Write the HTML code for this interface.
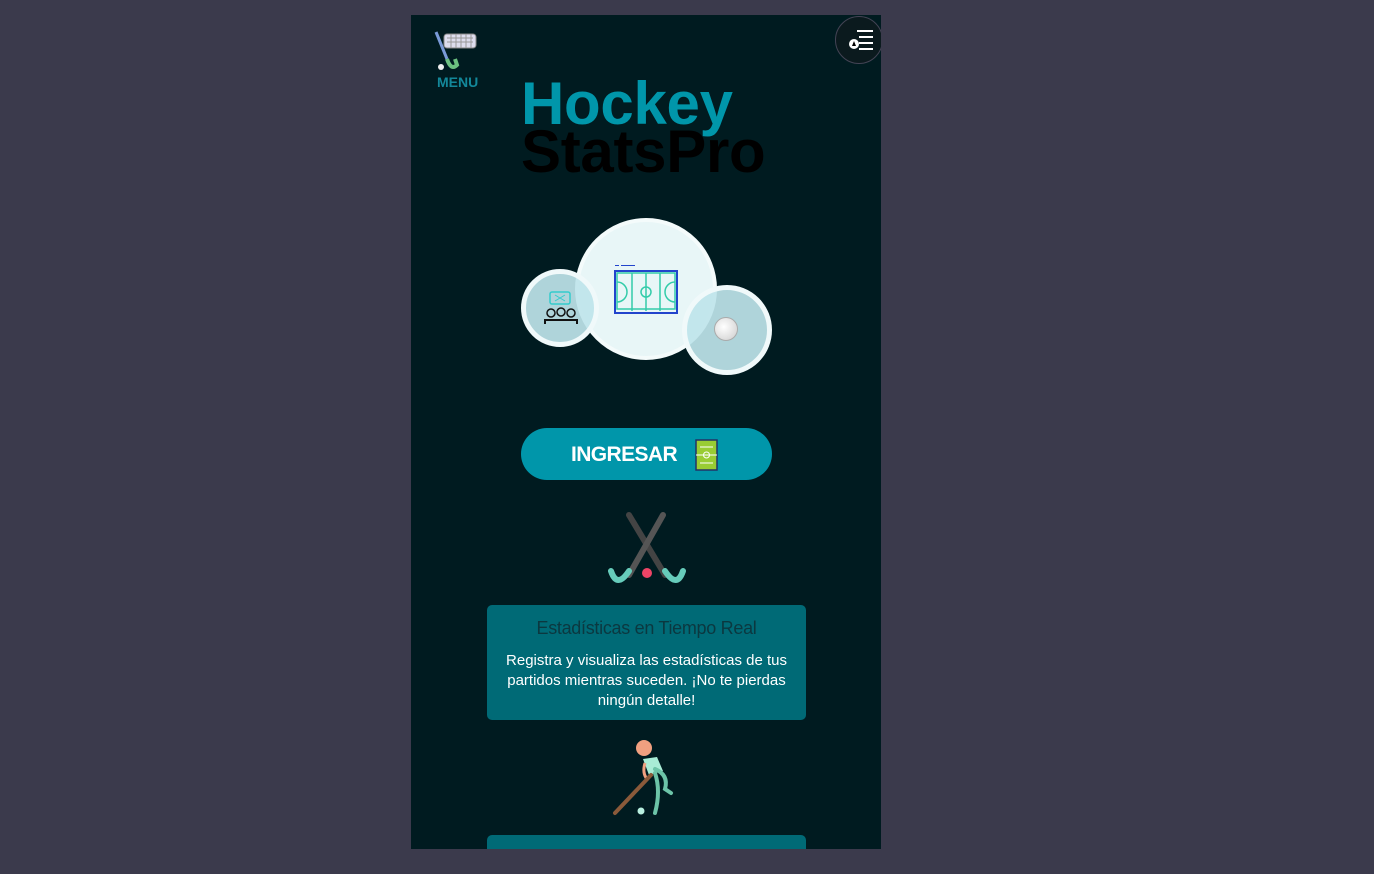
<!DOCTYPE html>
<html><head><meta charset="utf-8"><style>
*{margin:0;padding:0;box-sizing:border-box}
body{width:1374px;height:874px;background:#3b3a4c;position:relative;overflow:hidden;font-family:"Liberation Sans",sans-serif}
#app{position:absolute;left:411px;top:15px;width:470px;height:834px;background:#001b20;overflow:hidden}
.t{position:absolute;font-weight:bold;font-size:60px;line-height:50px;letter-spacing:-0.3px}
.card{position:absolute;left:76px;width:319px;background:#006a76;border-radius:5px;text-align:center}
</style></head><body>
<div id="app">
<svg style="position:absolute;left:22px;top:14px" width="46" height="46" viewBox="0 0 46 46">
<rect x="11" y="5" width="32" height="14" rx="3" fill="#dde" stroke="#888" stroke-width="1"/>
<path d="M14 9h26M14 13h26M18 5v14M23 5v14M28 5v14M33 5v14M38 5v14" stroke="#999" stroke-width="1"/>
<path d="M3 3 L14 30" stroke="#7a9ad8" stroke-width="3"/>
<path d="M14 30 Q18 42 24 36 L22 30" stroke="#6cc080" stroke-width="4" fill="none"/>
<circle cx="8" cy="38" r="3" fill="#eee"/>
</svg>
<div style="position:absolute;left:26px;top:59px;color:#13889a;font-weight:bold;font-size:14px">MENU</div>
<div style="position:absolute;left:424px;top:1px;width:48px;height:48px;border-radius:50%;background:#0b1a1e;border:1px solid #445"></div>
<svg style="position:absolute;left:436px;top:14px" width="28" height="22" viewBox="0 0 28 22"><path d="M10 2h16M12 8h14M12 14h14M12 20h14" stroke="#fff" stroke-width="2"/><circle cx="7" cy="15" r="5" fill="#fff"/><path d="M7 12l-2 5h4z" fill="#000"/></svg>
<div class="t" style="left:110px;top:64px;color:#0096aa">Hockey</div>
<div class="t" style="left:110px;top:112px;color:#000">StatsPro</div>
<div style="position:absolute;left:164px;top:203px;width:142px;height:142px;border-radius:50%;background:#e8f6f7;border:4px solid #f4fbfb"></div>
<div style="position:absolute;left:110px;top:254px;width:78px;height:78px;border-radius:50%;background:rgba(190,228,234,.92);border:5px solid #f0f9fa"></div>
<div style="position:absolute;left:271px;top:270px;width:90px;height:90px;border-radius:50%;background:rgba(190,228,234,.92);border:5px solid #f0f9fa"></div>
<svg style="position:absolute;left:198px;top:250px" width="74" height="50" viewBox="0 0 74 50"><rect x="6" y="6" width="62" height="42" fill="none" stroke="#2244cc" stroke-width="2"/><path d="M23 8v38M37 8v38M51 8v38M8 8h58v36H8z" stroke="#33ccaa" stroke-width="1.5" fill="none"/><circle cx="37" cy="27" r="5" fill="none" stroke="#33ccaa" stroke-width="1.5"/><path d="M8 17a10 10 0 0 1 0 20M66 17a10 10 0 0 0 0 20" stroke="#33ccaa" stroke-width="1.5" fill="none"/><path d="M6 0h4M12 0h14" stroke="#2244cc" stroke-width="2"/></svg>
<svg style="position:absolute;left:132px;top:276px" width="36" height="34" viewBox="0 0 36 34"><rect x="7" y="1" width="20" height="12" rx="2" fill="none" stroke="#3cc" stroke-width="1.5"/><path d="M12 4l10 6M22 4l-10 6" stroke="#3cc"/><circle cx="8" cy="22" r="4" fill="none" stroke="#111" stroke-width="1.5"/><circle cx="18" cy="21" r="4" fill="none" stroke="#111" stroke-width="1.5"/><circle cx="28" cy="22" r="4" fill="none" stroke="#111" stroke-width="1.5"/><path d="M2 33v-4h32v4" fill="none" stroke="#111" stroke-width="2"/></svg>
<div style="position:absolute;left:303px;top:302px;width:24px;height:24px;border-radius:50%;background:radial-gradient(circle at 40% 40%,#fff,#ccc);border:1px solid #aaa"></div>
<div style="position:absolute;left:110px;top:413px;width:251px;height:52px;border-radius:26px;background:#0096aa"></div>
<div style="position:absolute;left:160px;top:428px;color:#fff;font-weight:bold;font-size:21px;letter-spacing:-0.6px">INGRESAR</div>
<svg style="position:absolute;left:284px;top:424px" width="23" height="32" viewBox="0 0 23 32"><rect x="1" y="1" width="21" height="30" fill="#9c3" stroke="#236" stroke-width="1.5"/><path d="M1 16h21M5 8h13M5 24h13" stroke="#fff"/><circle cx="11.5" cy="16" r="3" fill="none" stroke="#fff"/></svg>
<svg style="position:absolute;left:196px;top:494px" width="80" height="76" viewBox="0 0 80 76"><path d="M22 6L58 66" stroke="#444" stroke-width="6" stroke-linecap="round"/><path d="M56 6L22 66" stroke="#555" stroke-width="6" stroke-linecap="round"/><path d="M22 62Q10 80 4 62M58 62Q70 80 76 62" stroke="#6cb" stroke-width="6" fill="none" stroke-linecap="round"/><circle cx="40" cy="64" r="5" fill="#e46"/></svg>
<div class="card" style="top:590px;height:115px">
<div style="margin-top:13px;color:#0b3840;font-size:18px;letter-spacing:-0.3px">Estadísticas en Tiempo Real</div>
<div style="margin-top:12px;color:#fff;font-size:15px;line-height:20px;padding:0 12px">Registra y visualiza las estadísticas de tus partidos mientras suceden. ¡No te pierdas ningún detalle!</div>
</div>
<svg style="position:absolute;left:200px;top:722px" width="72" height="82" viewBox="0 0 72 82"><circle cx="33" cy="11" r="8" fill="#f0a080"/><path d="M32 22l14 -2 6 14-14 4z" fill="#a8ecd6"/><path d="M44 32q14 6 10 20l6 4M44 36q6 18 0 40" stroke="#6cc4a8" stroke-width="4" fill="none" stroke-linecap="round"/><path d="M34 26q-3 10 2 16" stroke="#f0a080" stroke-width="3" fill="none"/><path d="M40 38L4 76" stroke="#8a5a3a" stroke-width="4" stroke-linecap="round"/><circle cx="30" cy="74" r="3.5" fill="#b8f0e0"/></svg>
<div class="card" style="top:820px;height:40px"></div>
</div>
</body></html>
